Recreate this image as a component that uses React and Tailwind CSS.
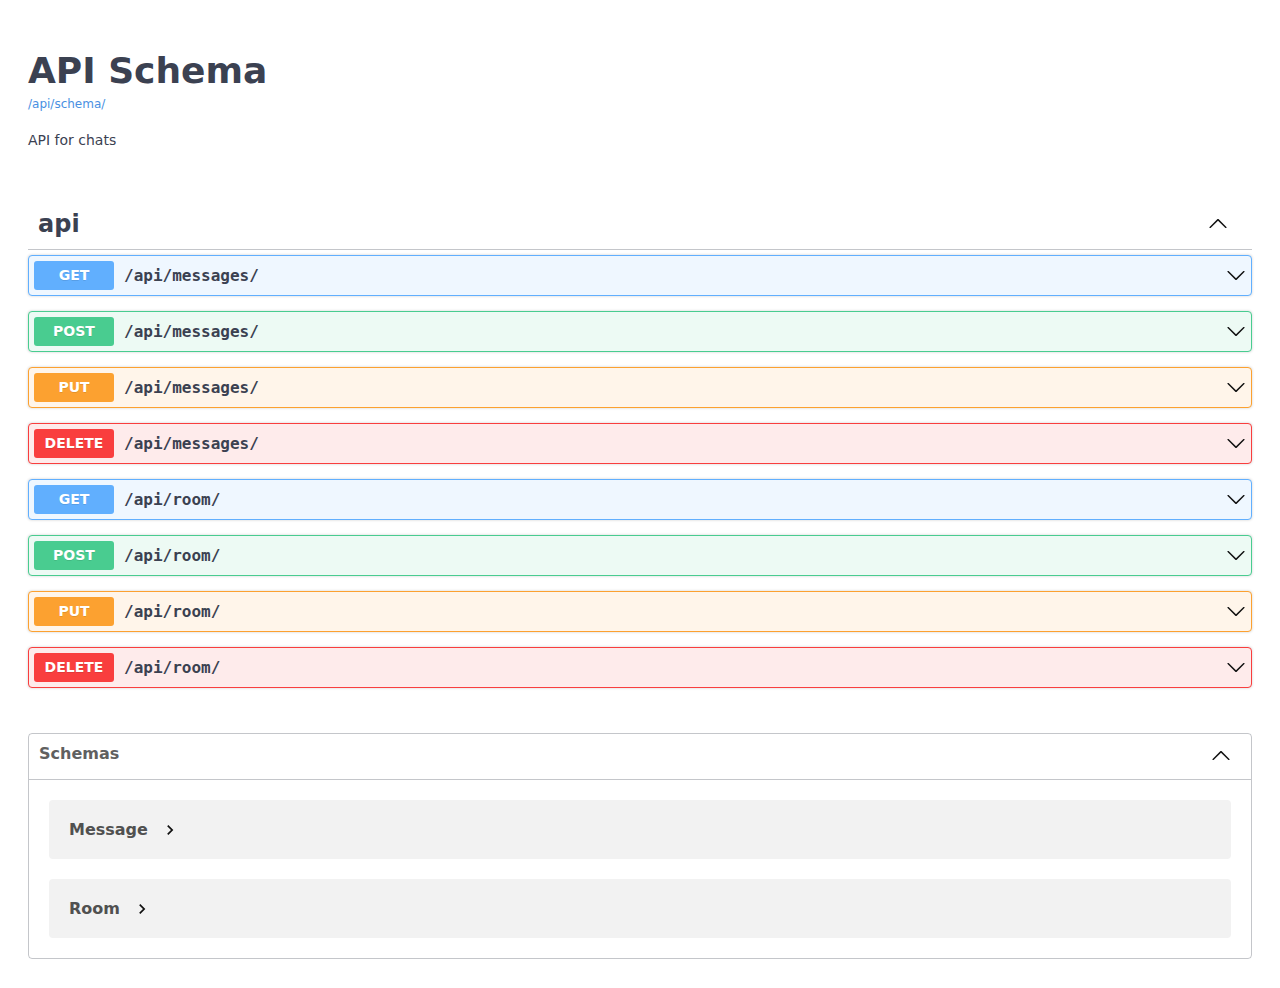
import React from "react";

const METHODS = {
  GET: { box: "bg-[#eff7ff] border-[#61affe]", badge: "bg-[#61affe]" },
  POST: { box: "bg-[#edfaf4] border-[#49cc90]", badge: "bg-[#49cc90]" },
  PUT: { box: "bg-[#fff5ea] border-[#fca130]", badge: "bg-[#fca130]" },
  DELETE: { box: "bg-[#feebeb] border-[#f93e3e]", badge: "bg-[#f93e3e]" },
};

const ops = [
  { method: "GET", path: "/api/messages/" },
  { method: "POST", path: "/api/messages/" },
  { method: "PUT", path: "/api/messages/" },
  { method: "DELETE", path: "/api/messages/" },
  { method: "GET", path: "/api/room/" },
  { method: "POST", path: "/api/room/" },
  { method: "PUT", path: "/api/room/" },
  { method: "DELETE", path: "/api/room/" },
];

// swagger-style chevron, points down by default
function Chevron({ up = false, className = "" }) {
  return (
    <svg viewBox="0 0 20 20" className={className} style={up ? { transform: "rotate(180deg)" } : undefined}>
      <path
        fill="currentColor"
        d="M17.418 6.109c.272-.268.709-.268.979 0s.271.701 0 .969l-7.908 7.83c-.27.268-.707.268-.979 0l-7.908-7.83c-.27-.268-.27-.701 0-.969.271-.268.709-.268.979 0L10 13.25l7.418-7.141z"
      />
    </svg>
  );
}

function ChevronRight() {
  return (
    <svg viewBox="0 0 24 24" className="w-[20px] h-[20px] text-[#111]">
      <path fill="currentColor" d="M10 6L8.59 7.41 13.17 12l-4.58 4.59L10 18l6-6z" />
    </svg>
  );
}

function OpBlock({ method, path }) {
  const m = METHODS[method];
  return (
    <div className={`mb-[15px] border rounded-[4px] shadow-[0_0_3px_rgba(0,0,0,0.19)] ${m.box}`}>
      <div className="flex items-center p-[5px]">
        <span
          className={`w-[80px] h-[29px] flex items-center justify-center rounded-[3px] text-white text-[14px] font-bold [text-shadow:0_1px_0_rgba(0,0,0,0.1)] ${m.badge}`}
        >
          {method}
        </span>
        <span className="px-[10px] flex-1 font-['DejaVu_Sans_Mono',monospace] font-semibold text-[16px] text-[#3b4151]">
          {path}
        </span>
        <Chevron className="w-[20px] h-[20px] mb-[2px] text-[#111]" />
      </div>
    </div>
  );
}

function ModelRow({ name }) {
  return (
    <div className="mx-[20px] mb-[20px] h-[59px] rounded-[4px] bg-[#f2f2f2] flex items-center px-[20px]">
      <span className="text-[16px] font-bold text-[#505050]">{name}</span>
      <span className="ml-[12px] flex items-center">
        <ChevronRight />
      </span>
    </div>
  );
}

export default function App() {
  return (
    <div className="min-h-screen bg-white font-['DejaVu_Sans',sans-serif] text-[#3b4151] px-[28px] pb-[30px]">
      {/* Info */}
      <div className="pt-[50px]">
        <h2 className="text-[36px] leading-[42px] font-bold text-[#3b4151]">API Schema</h2>
        <a className="block text-[12px] leading-[14px] mt-[5px] text-[#4990e2]">/api/schema/</a>
        <p className="text-[14px] leading-[16px] mt-[21px]">API for chats</p>
      </div>

      {/* Tag */}
      <div className="mt-[52px]">
        <div className="flex items-center h-[50px] pl-[10px] pr-[24px] pb-[2px] border-b border-[rgba(59,65,81,0.3)]">
          <h3 className="flex-1 text-[24px] font-bold text-[#3b4151]">api</h3>
          <Chevron up className="w-[20px] h-[20px] text-[#111]" />
        </div>
        <div className="mt-[5px]">
          {ops.map((op, i) => (
            <OpBlock key={i} {...op} />
          ))}
        </div>
      </div>

      {/* Schemas */}
      <div className="mt-[45px] border border-[rgba(59,65,81,0.3)] rounded-[4px]">
        <div className="h-[46px] flex items-center pl-[10px] pr-[20px] border-b border-[rgba(59,65,81,0.3)]">
          <h4 className="flex-1 mb-[6px] text-[16px] font-bold text-[#606060]">Schemas</h4>
          <Chevron up className="w-[20px] h-[20px] mb-[2px] text-[#111]" />
        </div>
        <div className="pt-[20px]">
          <ModelRow name="Message" />
          <ModelRow name="Room" />
        </div>
      </div>
    </div>
  );
}
